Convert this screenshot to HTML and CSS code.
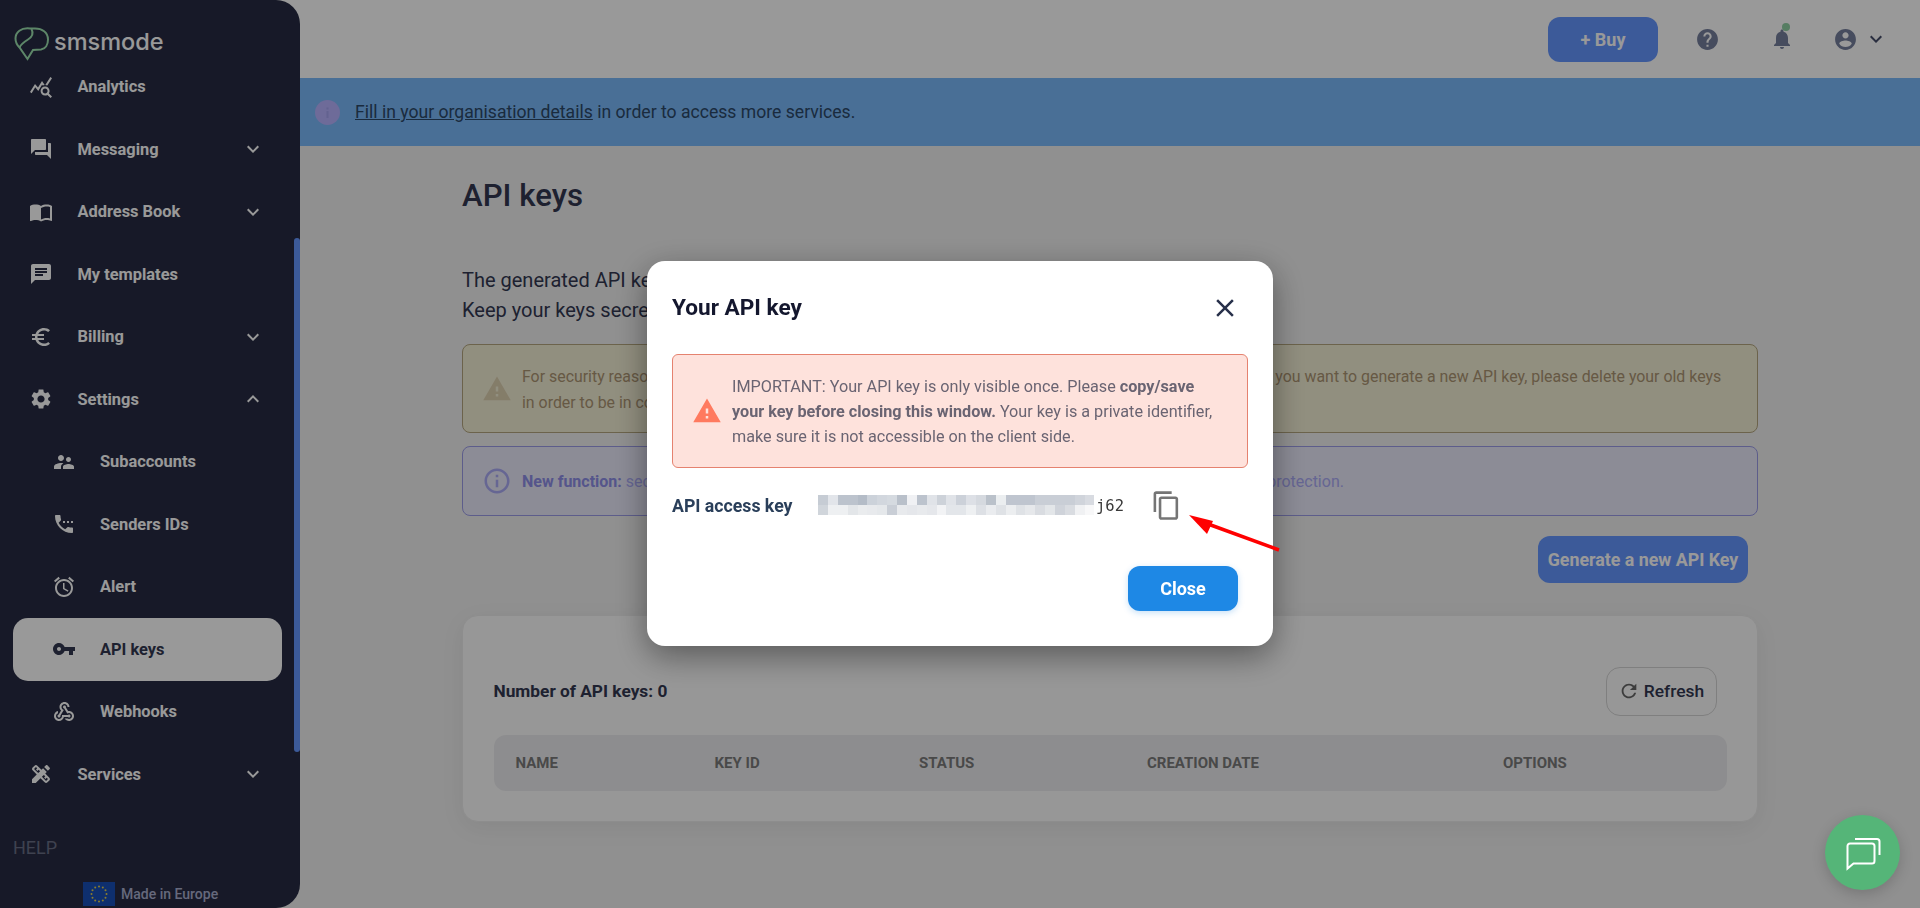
FILE: index.html
```html
<!DOCTYPE html>
<html lang="en">
<head>
<meta charset="utf-8">
<title>API keys</title>
<link rel="stylesheet" href="styles.css">
</head>
<body>
<div class="app">
  <aside class="sidebar">
    <div class="brand">
      <svg class="brand-mark" viewBox="14 26 36 35"><path d="M30 28.500C21 27.500 15.500 32 15.500 38.500C15.500 42 17 45 19.500 47.500L27.500 59L33 50L41 49.500C45.500 48.800 48 44.500 48 39.500C48 32 42 28.500 35 28.500Z"/><path d="M31.500 29C33.500 33 32 37 28 39.500C24 42 21 44 19.500 47.500"/></svg>
      <span class="brand-name">smsmode</span>
    </div>
    <nav class="menu">
      <a class="item"><svg class="ic" viewBox="0 0 24 24"><path d="M19.880 18.470c.44-.7.7-1.510.7-2.390 0-2.490-2.010-4.500-4.500-4.500s-4.500 2.010-4.500 4.500 2.010 4.500 4.490 4.500c.88 0 1.700-.26 2.390-.7L21.580 23 23 21.580l-3.120-3.110zm-3.800.11c-1.380 0-2.500-1.120-2.500-2.500s1.120-2.500 2.500-2.500 2.500 1.120 2.500 2.500-1.120 2.500-2.500 2.500zm-.36-8.500c-.74.02-1.450.18-2.100.45l-.55-.83-3.800 6.180-3.010-3.520-3.630 5.810L1 17l5-8 3 3.500L13 6l2.720 4.080zm2.590.5c-.64-.28-1.330-.45-2.050-.49L21.380 2 23 3.180l-4.690 7.400z"/></svg><span class="label">Analytics</span></a>
      <a class="item"><svg class="ic" viewBox="0 0 24 24"><path d="M21 6h-2v9H6v2c0 .55.45 1 1 1h11l4 4V7c0-.55-.45-1-1-1zm-4 6V3c0-.55-.45-1-1-1H3c-.55 0-1 .45-1 1v14l4-4h10c.55 0 1-.45 1-1z"/></svg><span class="label">Messaging</span><svg class="chev" viewBox="0 0 24 24"><path d="M16.590 8.590L12 13.170 7.410 8.590 6 10l6 6 6-6z"/></svg></a>
      <a class="item"><svg class="ic" viewBox="0 0 24 24"><path d="M21 5c-1.110-.35-2.330-.5-3.500-.5-1.950 0-4.050.4-5.500 1.500-1.450-1.100-3.550-1.500-5.500-1.500S2.450 4.900 1 6v14.650c0 .25.25.5.5.5.1 0 .15-.05.25-.05C3.100 20.450 5.050 20 6.500 20c1.950 0 4.050.4 5.500 1.500 1.350-.85 3.800-1.500 5.500-1.500 1.650 0 3.350.3 4.750 1.050.1.05.15.05.25.05.25 0 .5-.25.5-.5V6c-.6-.45-1.250-.75-2-1zm0 13.500c-1.100-.35-2.300-.5-3.500-.5-1.700 0-4.150.65-5.500 1.500V8c1.350-.85 3.800-1.500 5.500-1.500 1.200 0 2.400.15 3.500.5v11.500z"/></svg><span class="label">Address Book</span><svg class="chev" viewBox="0 0 24 24"><path d="M16.590 8.590L12 13.170 7.410 8.590 6 10l6 6 6-6z"/></svg></a>
      <a class="item"><svg class="ic" viewBox="0 0 24 24"><path d="M20 2H4c-1.100 0-1.990.9-1.990 2L2 22l4-4h14c1.100 0 2-.9 2-2V4c0-1.100-.9-2-2-2zM6 9h12v2H6V9zm8 5H6v-2h8v2zm4-6H6V6h12v2z"/></svg><span class="label">My templates</span></a>
      <a class="item"><svg class="ic" viewBox="0 0 24 24"><path d="M15 18.500c-2.510 0-4.680-1.420-5.760-3.500H15v-2H8.580c-.05-.33-.08-.66-.08-1s.03-.67.08-1H15V9H9.240C10.320 6.920 12.500 5.500 15 5.500c1.610 0 3.090.59 4.230 1.570L21 5.300C19.410 3.870 17.300 3 15 3c-3.920 0-7.240 2.510-8.480 6H3v2h3.060c-.04.33-.06.66-.06 1 0 .34.02.67.06 1H3v2h3.520c1.240 3.490 4.560 6 8.480 6 2.310 0 4.410-.87 6-2.300l-1.780-1.770c-1.130.98-2.600 1.570-4.220 1.570z"/></svg><span class="label">Billing</span><svg class="chev" viewBox="0 0 24 24"><path d="M16.590 8.590L12 13.170 7.410 8.590 6 10l6 6 6-6z"/></svg></a>
      <a class="item"><svg class="ic" viewBox="0 0 24 24"><path d="M19.140 12.940c.04-.3.06-.61.06-.94 0-.32-.02-.64-.07-.94l2.030-1.580c.18-.14.23-.41.12-.61l-1.920-3.320c-.12-.22-.37-.29-.59-.22l-2.390.96c-.5-.38-1.030-.7-1.620-.94l-.36-2.540c-.04-.24-.24-.41-.48-.41h-3.840c-.24 0-.43.17-.47.41l-.36 2.540c-.59.24-1.130.57-1.620.94l-2.390-.96c-.22-.08-.47 0-.59.22L2.740 8.870c-.12.21-.08.47.12.61l2.030 1.580c-.05.3-.09.63-.09.94s.02.64.07.94l-2.030 1.580c-.18.14-.23.41-.12.61l1.920 3.320c.12.22.37.29.59.22l2.390-.96c.5.38 1.030.7 1.620.94l.36 2.540c.05.24.24.41.48.41h3.840c.24 0 .44-.17.47-.41l.36-2.540c.59-.24 1.130-.56 1.620-.94l2.390.96c.22.08.47 0 .59-.22l1.920-3.320c.12-.22.07-.47-.12-.61l-2.010-1.580zM12 15.600c-1.980 0-3.600-1.620-3.600-3.600s1.620-3.600 3.600-3.600 3.600 1.620 3.600 3.600-1.620 3.600-3.600 3.600z"/></svg><span class="label">Settings</span><svg class="chev" viewBox="0 0 24 24"><path d="M12 8l-6 6 1.410 1.410L12 10.830l4.590 4.580L18 14z"/></svg></a>
      <a class="item sub"><svg class="ic" viewBox="0 0 24 24"><path d="M16.500 12c1.380 0 2.490-1.120 2.490-2.500S17.880 7 16.500 7C15.120 7 14 8.120 14 9.500s1.120 2.500 2.500 2.500zM9 11c1.660 0 2.990-1.340 2.990-3S10.660 5 9 5C7.340 5 6 6.340 6 8s1.340 3 3 3zm7.500 3c-1.830 0-5.500.92-5.500 2.750V19h11v-2.250c0-1.830-3.670-2.750-5.500-2.750zM9 13c-2.330 0-7 1.170-7 3.500V19h7v-2.250c0-.85.33-2.340 2.370-3.470C10.500 13.100 9.660 13 9 13z"/></svg><span class="label">Subaccounts</span></a>
      <a class="item sub"><svg class="ic" viewBox="0 0 24 24"><path d="M11 9h2v2h-2zm4 0h2v2h-2zm4 0h2v2h-2zM20 15.500c-1.250 0-2.450-.2-3.570-.57-.35-.11-.74-.03-1.020.24l-2.200 2.200c-2.830-1.440-5.150-3.750-6.590-6.590l2.200-2.210c.28-.26.36-.65.25-1C8.700 6.450 8.500 5.250 8.500 4c0-.55-.45-1-1-1H4c-.55 0-1 .45-1 1 0 9.390 7.610 17 17 17 .55 0 1-.45 1-1v-3.500c0-.55-.45-1-1-1z"/></svg><span class="label">Senders IDs</span></a>
      <a class="item sub"><svg class="ic" viewBox="0 0 24 24"><path d="M22 5.720l-4.600-3.860-1.290 1.530 4.600 3.860L22 5.720zM7.880 3.390L6.600 1.860 2 5.710l1.290 1.530 4.590-3.850zM12.500 8H11v6l4.750 2.850.75-1.230-4-2.370V8zM12 4c-4.970 0-9 4.030-9 9s4.030 9 9 9c4.970 0 9-4.030 9-9s-4.030-9-9-9zm0 16c-3.870 0-7-3.130-7-7s3.130-7 7-7 7 3.130 7 7-3.130 7-7 7z"/></svg><span class="label">Alert</span></a>
      <a class="item sub active"><svg class="ic" viewBox="0 0 24 24"><path d="M12.650 10C11.830 7.670 9.610 6 7 6c-3.310 0-6 2.690-6 6s2.690 6 6 6c2.610 0 4.830-1.670 5.650-4H17v4h4v-4h2v-4H12.650zM7 14c-1.100 0-2-.9-2-2s.9-2 2-2 2 .9 2 2-.9 2-2 2z"/></svg><span class="label">API keys</span></a>
      <a class="item sub"><svg class="ic" viewBox="0 0 24 24"><path d="M10 15h5.880c.27-.31.67-.5 1.120-.5.83 0 1.500.67 1.500 1.500s-.67 1.500-1.500 1.500c-.44 0-.84-.19-1.120-.5H11.900c-.46 2.280-2.480 4-4.900 4-2.760 0-5-2.240-5-5 0-2.420 1.720-4.440 4-4.900v2.070c-1.160.41-2 1.530-2 2.830 0 1.650 1.350 3 3 3s3-1.350 3-3v-1zm2.500-11c1.650 0 3 1.350 3 3h2c0-2.760-2.240-5-5-5s-5 2.240-5 5c0 1.430.6 2.710 1.550 3.620l-2.350 3.900c-.68.14-1.200.75-1.200 1.480 0 .83.67 1.500 1.500 1.500s1.500-.67 1.500-1.500c0-.16-.02-.31-.07-.45l3.380-5.630C10.490 9.610 9.500 8.420 9.500 7c0-1.650 1.350-3 3-3zm4.500 9c-.64 0-1.230.2-1.720.54l-3.050-5.070C11.530 8.350 11 7.740 11 7c0-.83.67-1.500 1.500-1.500S14 6.170 14 7c0 .15-.02.29-.06.43l2.190 3.650c.28-.05.57-.08.87-.08 2.760 0 5 2.240 5 5s-2.240 5-5 5c-1.850 0-3.470-1.010-4.330-2.500h2.670c.48.32 1.050.5 1.660.5 1.650 0 3-1.350 3-3s-1.350-3-3-3z"/></svg><span class="label">Webhooks</span></a>
      <a class="item"><svg class="ic" viewBox="0 0 24 24"><path d="M16.240 11.510l1.570-1.570-3.750-3.750-1.570 1.570-4.140-4.130c-.78-.78-2.050-.78-2.830 0l-1.900 1.900c-.78.78-.78 2.050 0 2.830l4.130 4.130L3 17.250V21h3.750l4.760-4.760 4.130 4.130c.95.95 2.230.6 2.830 0l1.900-1.900c.78-.78.78-2.050 0-2.830l-4.130-4.130zm-7.060-.44L5.040 6.940l1.890-1.900L8.200 6.310 7.020 7.500l1.410 1.410 1.190-1.190 1.450 1.450-1.890 1.900zm7.880 7.890l-4.130-4.140 1.900-1.900 1.450 1.450-1.190 1.190 1.410 1.410 1.190-1.190 1.270 1.270-1.900 1.910zM20.710 7.040c.39-.39.39-1.020 0-1.410l-2.340-2.340c-.47-.47-1.120-.29-1.410 0l-1.830 1.830 3.750 3.750 1.830-1.830z"/></svg><span class="label">Services</span><svg class="chev" viewBox="0 0 24 24"><path d="M16.590 8.590L12 13.170 7.410 8.590 6 10l6 6 6-6z"/></svg></a>
    </nav>
    <div class="help">HELP</div>
    <div class="made">
      <svg class="flag" viewBox="0 0 32 24"><rect width="32" height="24" fill="#184fb8"/><g fill="#e8d14a"><circle cx="16" cy="4.500" r="1"/><circle cx="19.800" cy="5.500" r="1"/><circle cx="22.500" cy="8.300" r="1"/><circle cx="23.500" cy="12" r="1"/><circle cx="22.500" cy="15.700" r="1"/><circle cx="19.800" cy="18.500" r="1"/><circle cx="16" cy="19.500" r="1"/><circle cx="12.200" cy="18.500" r="1"/><circle cx="9.500" cy="15.700" r="1"/><circle cx="8.500" cy="12" r="1"/><circle cx="9.500" cy="8.300" r="1"/><circle cx="12.200" cy="5.500" r="1"/></g></svg>
      <span>Made in Europe</span>
    </div>
    <div class="scroll-thumb"></div>
  </aside>

  <div class="main">
    <header class="topbar">
      <button class="btn buy">+ Buy</button>
      <svg class="top-ic help-ic" viewBox="0 0 24 24"><path d="M12 2C6.480 2 2 6.480 2 12s4.480 10 10 10 10-4.480 10-10S17.520 2 12 2zm1 17h-2v-2h2v2zm2.070-7.750l-.9.92C13.450 12.900 13 13.500 13 15h-2v-.5c0-1.100.45-2.100 1.170-2.830l1.240-1.260c.37-.36.59-.86.59-1.410 0-1.100-.9-2-2-2s-2 .9-2 2H8c0-2.210 1.790-4 4-4s4 1.790 4 4c0 .88-.36 1.680-.93 2.250z"/></svg>
      <span class="bell"><svg class="top-ic" viewBox="0 0 24 24"><path d="M12 22c1.100 0 2-.9 2-2h-4c0 1.100.89 2 2 2zm6-6v-5c0-3.070-1.640-5.640-4.500-6.320V4c0-.83-.67-1.500-1.500-1.500s-1.500.67-1.500 1.500v.68C7.630 5.360 6 7.920 6 11v5l-2 2v1h16v-1l-2-2z"/></svg><i class="dot"></i></span>
      <svg class="top-ic account" viewBox="0 0 24 24"><path d="M12 2C6.480 2 2 6.480 2 12s4.480 10 10 10 10-4.480 10-10S17.520 2 12 2zm0 3c1.660 0 3 1.340 3 3s-1.340 3-3 3-3-1.340-3-3 1.340-3 3-3zm0 14.200c-2.500 0-4.710-1.280-6-3.220.03-1.990 4-3.080 6-3.080 1.990 0 5.970 1.090 6 3.080-1.290 1.940-3.500 3.220-6 3.220z"/></svg>
      <svg class="top-chev" viewBox="0 0 24 24"><path d="M16.590 8.590L12 13.170 7.410 8.590 6 10l6 6 6-6z"/></svg>
    </header>

    <div class="banner">
      <svg class="banner-ic" viewBox="0 0 25 25"><circle cx="12.500" cy="12.500" r="12.500" fill="#b7b2ff"/><rect x="11.500" y="11" width="2" height="7" fill="#a6a4f0"/><rect x="11.500" y="7.500" width="2" height="2" fill="#a6a4f0"/></svg>
      <p><a class="banner-link">Fill in your organisation details</a> in order to access more services.</p>
    </div>

    <main class="content">
      <h1 class="title">API keys</h1>
      <p class="intro">The generated API keys are used to authenticate your requests.<br>Keep your keys secret and never share them.</p>
      <div class="note warn">
        <svg class="note-ic" viewBox="0 0 24 24"><path d="M1 21h22L12 2 1 21zm12-3h-2v-2h2v2zm0-4h-2v-4h2v4z"/></svg>
        <p>For security reasons, only one API key can be active per account and it can't be seen again any time later. If you want to generate a new API key, please delete your old keys in order to be in compliance.</p>
      </div>
      <div class="note info">
        <svg class="note-ic" viewBox="0 0 24 24"><path d="M11 7h2v2h-2zm0 4h2v6h-2zm1-9C6.480 2 2 6.480 2 12s4.480 10 10 10 10-4.480 10-10S17.520 2 12 2zm0 18c-4.410 0-8-3.590-8-8s3.590-8 8-8 8 3.590 8 8-3.590 8-8 8z"/></svg>
        <p><b>New function:</b> secure the API keys by IP address restriction and two-factor authentication, for better data protection.</p>
      </div>
      <div class="actions"><button class="btn generate">Generate a new API Key</button></div>
      <section class="card">
        <div class="card-head">
          <strong class="count">Number of API keys: 0</strong>
          <button class="refresh"><svg viewBox="0 0 24 24"><path d="M17.650 6.350C16.200 4.900 14.210 4 12 4c-4.420 0-7.990 3.580-7.990 8s3.570 8 7.990 8c3.730 0 6.840-2.550 7.730-6h-2.080c-.82 2.330-3.040 4-5.650 4-3.310 0-6-2.690-6-6s2.690-6 6-6c1.660 0 3.140.69 4.220 1.780L13 11h7V4l-2.350 2.350z"/></svg>Refresh</button>
        </div>
        <div class="thead">
          <span class="c1">NAME</span><span class="c2">KEY ID</span><span class="c3">STATUS</span><span class="c4">CREATION DATE</span><span>OPTIONS</span>
        </div>
      </section>
    </main>
  </div>
</div>

<div class="overlay">
  <div class="modal">
    <div class="modal-head">
      <h2>Your API key</h2>
      <svg class="x" viewBox="0 0 24 24"><path d="M19 6.410L17.590 5 12 10.590 6.410 5 5 6.410 10.590 12 5 17.590 6.410 19 12 13.410 17.590 19 19 17.590 13.410 12z"/></svg>
    </div>
    <div class="alert">
      <svg viewBox="0 0 24 24"><path d="M1 21h22L12 2 1 21zm12-3h-2v-2h2v2zm0-4h-2v-4h2v4z"/></svg>
      <p>IMPORTANT: Your API key is only visible once. Please <b>copy/save your key before closing this window.</b> Your key is a private identifier, make sure it is not accessible on the client side.</p>
    </div>
    <div class="key-row">
      <strong>API access key</strong>
      <svg class="blur" viewBox="0 0 28 2" preserveAspectRatio="none" shape-rendering="crispEdges">
        <g>
          <rect x="0" y="0" width="1" height="1" fill="#c6ccd4"/><rect x="1" y="0" width="1" height="1" fill="#e2e5ea"/><rect x="2" y="0" width="2" height="1" fill="#bcc3cd"/><rect x="4" y="0" width="1" height="1" fill="#b4bcc7"/><rect x="5" y="0" width="1" height="1" fill="#ccd2da"/><rect x="6" y="0" width="1" height="1" fill="#d2d7de"/><rect x="7" y="0" width="1" height="1" fill="#d5dae0"/><rect x="8" y="0" width="1" height="1" fill="#b9c0ca"/><rect x="9" y="0" width="1" height="1" fill="#f0f1f4"/><rect x="10" y="0" width="1" height="1" fill="#bcc3cd"/><rect x="11" y="0" width="1" height="1" fill="#e0e3e8"/><rect x="12" y="0" width="1" height="1" fill="#cdd2d9"/><rect x="13" y="0" width="1" height="1" fill="#e0e3e8"/><rect x="14" y="0" width="1" height="1" fill="#ccd1d9"/><rect x="15" y="0" width="1" height="1" fill="#dde0e6"/><rect x="16" y="0" width="1" height="1" fill="#d5d9df"/><rect x="17" y="0" width="1" height="1" fill="#bac1ca"/><rect x="18" y="0" width="1" height="1" fill="#ebeef0"/><rect x="19" y="0" width="3" height="1" fill="#bfc5cf"/><rect x="22" y="0" width="4" height="1" fill="#c9ced6"/><rect x="26" y="0" width="1" height="1" fill="#d0d4db"/><rect x="27" y="0" width="1" height="1" fill="#d8dbe1"/>
          <rect x="0" y="1" width="1" height="1" fill="#d0d5db"/><rect x="1" y="1" width="2" height="1" fill="#eef0f2"/><rect x="3" y="1" width="1" height="1" fill="#e3e6e9"/><rect x="4" y="1" width="1" height="1" fill="#eaecee"/><rect x="5" y="1" width="1" height="1" fill="#e8eaed"/><rect x="6" y="1" width="1" height="1" fill="#e5e8eb"/><rect x="7" y="1" width="1" height="1" fill="#c9ced6"/><rect x="8" y="1" width="1" height="1" fill="#e8eaed"/><rect x="9" y="1" width="1" height="1" fill="#e5e7eb"/><rect x="10" y="1" width="1" height="1" fill="#e8eaed"/><rect x="11" y="1" width="1" height="1" fill="#e5e7eb"/><rect x="12" y="1" width="1" height="1" fill="#f2f3f5"/><rect x="13" y="1" width="2" height="1" fill="#e3e6ea"/><rect x="15" y="1" width="1" height="1" fill="#eef0f2"/><rect x="16" y="1" width="1" height="1" fill="#dde0e5"/><rect x="17" y="1" width="1" height="1" fill="#eaecef"/><rect x="18" y="1" width="1" height="1" fill="#dfe2e6"/><rect x="19" y="1" width="1" height="1" fill="#eceef0"/><rect x="20" y="1" width="1" height="1" fill="#dfe2e6"/><rect x="21" y="1" width="1" height="1" fill="#e6e8eb"/><rect x="22" y="1" width="1" height="1" fill="#d9dce1"/><rect x="23" y="1" width="1" height="1" fill="#e3e6e9"/><rect x="24" y="1" width="1" height="1" fill="#cfd3da"/><rect x="25" y="1" width="1" height="1" fill="#d9dce1"/><rect x="26" y="1" width="1" height="1" fill="#f0f1f3"/><rect x="27" y="1" width="1" height="1" fill="#f8f8f9"/>
        </g>
      </svg>
      <code>j62</code>
      <svg class="copy" viewBox="0 0 24 24"><path d="M16 1H4c-1.100 0-2 .9-2 2v14h2V3h12V1zm3 4H8c-1.100 0-2 .9-2 2v14c0 1.100.9 2 2 2h11c1.100 0 2-.9 2-2V7c0-1.100-.9-2-2-2zm0 16H8V7h11v14z"/></svg>
    </div>
    <div class="modal-foot"><button class="close">Close</button></div>
    <svg class="arrow" viewBox="0 0 92 37"><line x1="20" y1="9" x2="91" y2="35" stroke="#f00" stroke-width="3.500"/><polygon points="1,0 25,6 19,19" fill="#f00"/></svg>
  </div>
</div>

<button class="chat">
  <svg viewBox="1 -1 40 40"><path d="M5.500 34.500V12a2.500 2.500 0 0 1 2.500-2.500h22a2.500 2.500 0 0 1 2.500 2.500v15a2.500 2.500 0 0 1-2.500 2.500H11.500z"/><path d="M13 5h22a2.500 2.500 0 0 1 2.500 2.500V21"/></svg>
</button>
</body>
</html>
```

FILE: styles.css
```css
* { box-sizing: border-box; }
html, body { margin: 0; height: 100%; }
body { font-family: Roboto, "Liberation Sans", sans-serif; background: #f0f0f0; color: #323750; overflow: hidden; }
p, h1, h2 { margin: 0; }
button { font-family: inherit; border: 0; cursor: pointer; }

.app { display: flex; height: 908px; }

/* sidebar */
.sidebar { position: relative; flex: 0 0 300px; height: 908px; display: flex; flex-direction: column; background: #272b43; border-radius: 0 24px 24px 0; color: #fff; z-index: 2; }
.brand { height: 55.5px; padding: 26px 0 0 14px; display: flex; align-items: flex-start; gap: 4px; }
.brand-mark { width: 36px; height: 35px; fill: none; stroke: #9be0ae; stroke-width: 2; flex: none; }
.brand-name { font-family: Inter, Roboto, sans-serif; font-size: 23.5px; font-weight: 500; line-height: 32px; }
.menu { display: flex; flex-direction: column; }
.item { height: 62.5px; display: flex; align-items: center; padding-left: 29px; padding-right: 35px; font-size: 16.4px; font-weight: 700; color: #fff; }
.item.sub { padding-left: 52px; margin: 0 18px 0 0; }
.item.active { background: #fff; color: #323750; margin-left: 13px; width: 269px; padding-left: 39px; border-radius: 15px; }
.ic { width: 24px; height: 24px; fill: currentColor; flex: none; margin-right: 24.5px; }
.sub .ic { margin-right: 24px; }
.label { flex: 1; }
.chev { width: 24px; height: 24px; fill: currentColor; flex: none; }
.help { margin: 30.5px 0 0 13px; font-size: 18px; line-height: 24px; color: #696e85; }
.made { margin: 22px 0 0 83px; display: flex; align-items: center; gap: 6px; font-size: 14px; font-weight: 500; color: #aab0cf; }
.flag { width: 32px; height: 24px; flex: none; }
.scroll-thumb { position: absolute; top: 238px; right: 0; width: 6px; height: 514px; background: #6596ff; border-radius: 3px; }

/* main */
.main { flex: 1; min-width: 0; display: flex; flex-direction: column; }
.topbar { height: 78px; flex: none; background: #fff; margin-left: -30px; display: flex; align-items: center; justify-content: flex-end; padding-right: 32px; }
.btn { background: #6596ff; color: #fff; font-weight: 700; border-radius: 12px; }
.buy { width: 110px; height: 45px; font-size: 18px; margin-right: 37px; }
.top-ic { width: 24px; height: 24px; fill: #757f9d; display: block; flex: none; }
.help-ic { width: 25px; height: 25px; margin-right: 50px; }
.bell { position: relative; display: block; margin-right: 39px; }
.dot { position: absolute; top: -4px; left: 12px; width: 8px; height: 8px; border-radius: 50%; background: #8fd0a3; }
.top-chev { width: 24px; height: 24px; fill: #464e6b; margin-left: 6px; }
.account { width: 25px; height: 25px; }
.banner { height: 68px; flex: none; background: #7bb9fa; display: flex; align-items: center; padding-left: 15px; gap: 15px; font-size: 17.6px; color: #2c4868; }
.banner-ic { width: 25px; height: 25px; flex: none; }
.banner-link { text-decoration: underline; }

.content { padding: 30px 162.5px 0 162px; }
.title { font-size: 31.2px; font-weight: 500; line-height: 40px; color: #323750; }
.intro { margin-top: 49px; font-size: 20px; line-height: 30px; color: #323750; }
.note { display: flex; align-items: center; border: 1px solid; border-radius: 8px; margin-top: 13px; padding-left: 19px; font-size: 16px; line-height: 25.5px; }
.note p { padding-top: 2px; }
.note-ic { width: 30px; height: 30px; flex: none; margin-right: 10px; fill: currentColor; }
.warn { margin-top: 19px; height: 89px; background: #f2eed4; border-color: #b4a67f; color: #ab9472; font-size: 15.9px; }
.warn .note-ic { fill: #ddd0b0; }
.warn p { padding-right: 24px; }
.info { height: 70px; background: #e9e9fa; border-color: #9c9ce8; color: #aaaaf5; }
.info b { color: #8e8ee8; }
.actions { display: flex; justify-content: flex-end; margin-top: 20px; padding-right: 9.5px; }
.generate { width: 210px; height: 47px; font-size: 17.8px; }
.card { margin-top: 32px; height: 207px; padding: 0 30px 0 30.5px; background: #fcfcfc; border: 1px solid #ececec; border-radius: 16px; box-shadow: 0 6px 24px rgba(0,0,0,.06); }
.card-head { height: 119px; display: flex; align-items: center; justify-content: space-between; padding: 31px 10px 0 0; }
.count { font-size: 17.3px; font-weight: 700; color: #323750; }
.refresh { width: 111px; height: 49px; display: flex; align-items: center; justify-content: center; gap: 4px; background: transparent; border: 1px solid #d4d4d4; border-radius: 14px; font-size: 17.4px; font-weight: 500; color: #323750; }
.refresh svg { width: 22px; height: 22px; fill: #666; }
.thead { height: 56px; display: flex; align-items: center; padding-left: 22px; background: #ececee; border-radius: 12px; font-size: 15px; font-weight: 700; color: #7a7a7a; }
.c1 { width: 199px; } .c2 { width: 204.5px; } .c3 { width: 228px; } .c4 { width: 356px; }

/* modal */
.overlay { position: fixed; inset: 0; z-index: 10; background: rgba(0,0,0,.4); display: flex; align-items: center; justify-content: center; padding-bottom: 1px; }
.modal { position: relative; width: 626px; height: 385px; padding: 32px 25px 0; background: #fff; border-radius: 18px; box-shadow: 0 10px 32px rgba(0,0,0,.42); }
.modal-head { height: 30px; display: flex; align-items: center; justify-content: space-between; }
.modal-head h2 { font-size: 22.6px; font-weight: 700; line-height: 30px; color: #14172e; }
.x { width: 30px; height: 30px; fill: #27304a; margin-right: 8px; }
.alert { margin-top: 31px; height: 114px; display: flex; align-items: center; padding: 0 24px 0 21px; background: #fee2dc; border: 1px solid #e5826f; border-radius: 6px; font-size: 16.2px; line-height: 25px; color: #6a6472; }
.alert svg { width: 30px; height: 30px; flex: none; fill: #ff7a5f; margin-right: 10.5px; margin-left: -2.5px; }
.key-row { margin-top: 22px; height: 31px; display: flex; align-items: center; }
.key-row strong { width: 145.5px; flex: none; font-size: 17.7px; font-weight: 700; color: #2a3f5a; }
.blur { width: 276.5px; height: 20px; flex: none; margin-top: -1px; }
.key-row code { font-family: "DejaVu Sans Mono", monospace; font-size: 15.5px; color: #3a3a3a; margin-left: 2px; width: 55px; flex: none; }
.copy { width: 31px; height: 31px; fill: #757575; flex: none; }
.modal-foot { margin-top: 45px; display: flex; justify-content: flex-end; padding-right: 10px; }
.close { width: 110px; height: 45px; background: #1e88e5; color: #fff; font-size: 18px; font-weight: 700; border-radius: 12px; box-shadow: 0 2px 6px rgba(30,136,229,.25); }
.arrow { position: absolute; left: 541px; top: 254px; width: 92px; height: 37px; overflow: visible; }

/* chat */
.chat { position: fixed; z-index: 20; right: 20px; bottom: 18px; width: 75px; height: 75px; padding: 0; border-radius: 50%; background: #55b578; box-shadow: 0 4px 14px rgba(0,0,0,.18); display: flex; align-items: center; justify-content: center; }
.chat svg { width: 40px; height: 40px; fill: none; stroke: #fff; stroke-width: 2; }
```
